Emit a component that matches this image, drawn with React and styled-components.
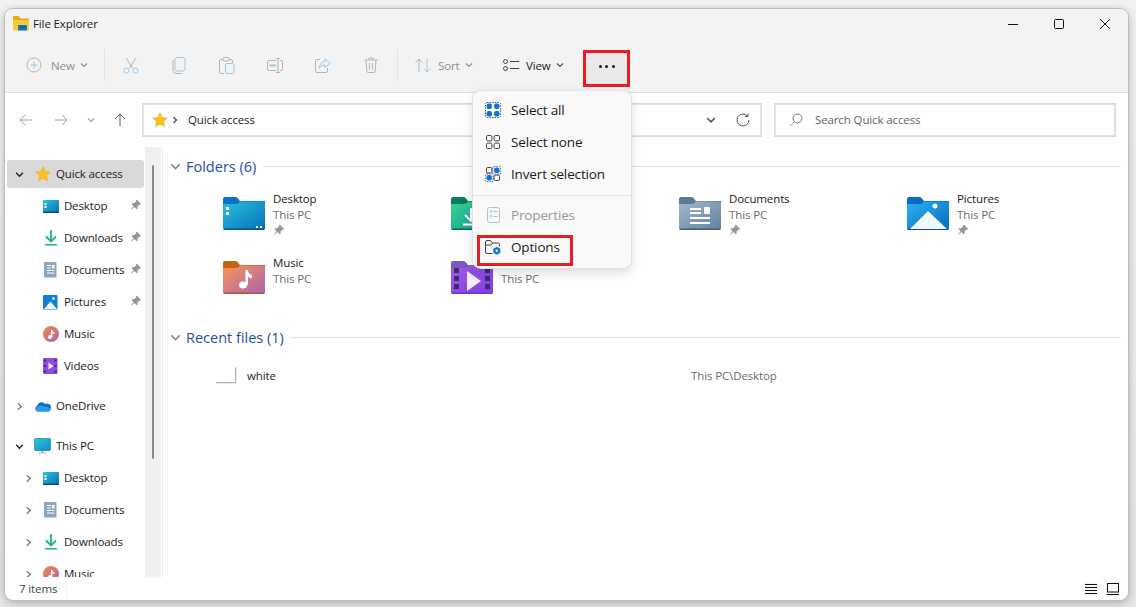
import React from 'react';
import styled, { createGlobalStyle } from 'styled-components';

const GlobalStyle = createGlobalStyle`
  html, body {
    margin: 0;
    padding: 0;
    background: #e9e9e9;
    overflow: hidden;
  }
  body {
    font-family: "Open Sans", "Noto Sans", sans-serif;
    font-size: 11.5px;
    letter-spacing: -0.12px;
    color: #1a1a1a;
  }
`;

const Page = styled.div`
  width: 1136px;
  height: 607px;
  padding: 9px 8px 7px 5px;
  box-sizing: border-box;
  background: linear-gradient(180deg, #f2f2f2 0%, #e6e6e6 100%);
`;

const Window = styled.div`
  position: relative;
  height: 100%;
  display: flex;
  flex-direction: column;
  background: #fff;
  border-radius: 8px;
  box-shadow: 0 0 0 1px #bdbdbd, 0 2px 10px rgba(0, 0, 0, 0.3);
`;

const TitleBar = styled.div`
  height: 29px;
  flex: none;
  display: flex;
  align-items: center;
  padding: 0 0 0 8px;
  background: #f3f3f3;
  border-radius: 8px 8px 0 0;
`;

const TitleText = styled.span`
  margin-left: 3px;
  flex: 1;
`;

const WindowButton = styled.div`
  width: 46px;
  height: 29px;
  display: flex;
  align-items: center;
  justify-content: center;
`;

const Toolbar = styled.div`
  height: 55px;
  flex: none;
  display: flex;
  align-items: center;
  padding-left: 9px;
  background: #f3f3f3;
  border-bottom: 1px solid #dedede;
  box-sizing: border-box;
`;

const ToolButton = styled.div`
  width: ${(p) => p.$w}px;
  padding-left: ${(p) => p.$pad}px;
  box-sizing: border-box;
  display: flex;
  align-items: center;
  gap: 5px;
  color: ${(p) => (p.$off ? '#8f8f8f' : '#1a1a1a')};
  svg:first-child {
    margin-right: ${(p) => p.$iconGap}px;
  }
`;

const IconButton = styled.div`
  width: 48px;
  display: flex;
  justify-content: center;
`;

const ToolSeparator = styled.div`
  width: 1px;
  height: 32px;
  margin: 0 2px;
  background: #e2e2e2;
`;

const MoreButton = styled.div`
  position: relative;
  width: 41px;
  height: 31px;
  margin: 7px 0 0 11px;
  display: flex;
  justify-content: center;
  align-items: center;
  background: #e9e9e9;
`;

const Dots = styled.div`
  display: flex;
  gap: 3.5px;
  margin-top: -5px;
`;

const Dot = styled.span`
  width: 3px;
  height: 3px;
  border-radius: 50%;
  background: #1a1a1a;
`;

const RedFrame = styled.div`
  position: absolute;
  border: 3px solid #ed1c24;
  left: ${(p) => p.$left}px;
  top: ${(p) => p.$top}px;
  width: ${(p) => p.$w}px;
  height: ${(p) => p.$h}px;
  box-sizing: border-box;
`;

const AddressRow = styled.div`
  height: 54px;
  flex: none;
  display: flex;
  align-items: center;
  padding: 0 12px 0 0;
  box-sizing: border-box;
`;

const NavArrow = styled.div`
  width: ${(p) => p.$w}px;
  display: flex;
  justify-content: center;
`;

const RefreshSlot = styled(NavArrow)`
  margin-left: 6px;
`;

const AddressBox = styled.div`
  width: 620px;
  height: 34px;
  margin-left: 9px;
  box-sizing: border-box;
  border: 1px solid #d9d9d9;
  outline: 1px solid #e4e4e4;
  outline-offset: -2px;
  display: flex;
  align-items: center;
  padding-left: 9px;
  gap: 3px;
  span {
    margin-top: -2px;
  }
`;

const AddressText = styled.span`
  flex: 1;
  margin-left: 6px;
`;

const SearchBox = styled(AddressBox)`
  width: 342px;
  margin-left: 12px;
  padding-left: 14px;
  gap: 12px;
  color: #5f5f5f;
`;

const Main = styled.div`
  flex: 1;
  min-height: 0;
  display: flex;
`;

const NavPane = styled.div`
  width: 140px;
  flex: none;
  overflow: hidden;
  padding: 13px 1px 0 2px;
  box-sizing: border-box;
`;

const NavRow = styled.div`
  height: 28px;
  margin-bottom: ${(p) => (p.$spaced ? 12 : 4)}px;
  display: flex;
  align-items: center;
  position: relative;
  border-radius: 3px;
  background: ${(p) => (p.$active ? '#d9d9d9' : 'transparent')};
  span {
    margin-top: -2px;
  }
`;

const NavChevron = styled.div`
  width: ${(p) => (p.$level ? 33 : 26)}px;
  flex: none;
  padding-left: ${(p) => (p.$level ? 17 : 8)}px;
  box-sizing: border-box;
  display: flex;
`;

const NavIconSlot = styled.div`
  width: 21px;
  flex: none;
  display: flex;
  justify-content: center;
  margin-left: ${(p) => (p.$top ? -1 : 0)}px;
`;

const NavLabel = styled.span`
  flex: 1;
`;

const NavPin = styled.div`
  position: absolute;
  right: 2px;
  top: 7px;
`;

const ScrollTrack = styled.div`
  width: 16px;
  flex: none;
  background: #f0f0f0;
  padding: 18px 0 0 7px;
  box-sizing: border-box;
`;

const ScrollThumb = styled.div`
  width: 2px;
  height: 294px;
  background: #8b8b8b;
  border-radius: 1px;
`;

const Content = styled.div`
  flex: 1;
  min-width: 0;
  padding: 9px 7px 0 7px;
  border-left: 1px solid #ececec;
  margin-left: 1px;
`;

const SectionHeader = styled.div`
  height: 20px;
  display: flex;
  align-items: center;
  gap: 5px;
  margin-top: ${(p) => p.$mt || 0}px;
  font-size: 14.5px;
  letter-spacing: 0;
  color: #1f4fa5;
`;

const SectionLine = styled.div`
  flex: 1;
  height: 1px;
  margin: 1px 0 0 2px;
  background: #e3e3e3;
`;

const FolderGrid = styled.div`
  display: grid;
  grid-template-columns: repeat(4, 228px);
  grid-auto-rows: 64px;
  padding-left: 53px;
  margin-top: 15px;
`;

const FolderTile = styled.div`
  display: flex;
  gap: 8px;
  align-items: flex-start;
`;

const FolderArt = styled.div`
  margin-top: 6px;
  line-height: 0;
`;

const TileText = styled.div`
  display: flex;
  flex-direction: column;
  line-height: 16px;
`;

const SubText = styled.span`
  color: #6e6a70;
`;

const PinSlot = styled.div`
  line-height: 0;
  margin-top: 1px;
`;

const FileRow = styled.div`
  display: flex;
  align-items: center;
  height: 20px;
  margin-top: 18px;
  padding-left: 46px;
`;

const FileIcon = styled.div`
  width: 20px;
  height: 16px;
  margin-right: 11px;
  box-sizing: border-box;
  border-right: 1px solid #b5b5b5;
  border-bottom: 1px solid #b5b5b5;
  box-shadow: 1px 1px 0 #e8e8e8;
`;

const FileName = styled.span`
  width: 444px;
`;

const StatusBar = styled.div`
  height: 23px;
  flex: none;
  display: flex;
  align-items: center;
  padding: 0 8px 0 14px;
  color: #444;
`;

const StatusText = styled.span`
  width: 47px;
`;

const StatusDivider = styled.div`
  width: 1px;
  height: 16px;
  background: #f0f0f0;
  flex: none;
`;

const StatusIcons = styled.div`
  margin-left: auto;
  display: flex;
  gap: 8px;
`;

const StatusIcon = styled.div`
  width: 14px;
  height: 14px;
  line-height: 0;
  background: #f7f7f7;
`;

const Menu = styled.div`
  position: absolute;
  left: 468px;
  top: 82px;
  width: 158px;
  height: 177px;
  box-sizing: border-box;
  padding-top: 3px;
  background: #f9f9f9;
  border-radius: 8px;
  box-shadow: 0 0 0 1px #e0e0e0, 0 4px 12px rgba(0, 0, 0, 0.16);
  z-index: 5;
`;

const MenuRow = styled.div`
  position: relative;
  height: 32px;
  display: flex;
  align-items: center;
  padding-left: 12px;
  gap: 10px;
  font-size: 13.5px;
  letter-spacing: -0.15px;
  color: ${(p) => (p.$off ? '#9a9a9a' : '#1a1a1a')};
`;

const MenuIcon = styled.div`
  width: 16px;
  flex: none;
  display: flex;
  justify-content: center;
  line-height: 0;
`;

const MenuSeparator = styled.div`
  height: 1px;
  margin: 5px 0 3px;
  background: #e6e6e6;
`;

/* icons */

const Chevron = ({ dir = 'down', color = '#555', size = 8 }) => {
  const d = dir === 'down' ? 'M1 2.5l3 3 3-3' : 'M2.5 1l3 3-3 3';
  return (
    <svg width={size} height={size} viewBox="0 0 8 8" fill="none">
      <path d={d} stroke={color} strokeWidth="1.2" />
    </svg>
  );
};

const TitleFolder = () => (
  <svg width="17" height="15" viewBox="0 0 17 15">
    <path d="M0 1.5C0 .7.6 0 1.4 0h4L7.5 2.5H16v2H0z" fill="#e8a917" />
    <rect y="4" width="16" height="10.5" rx="1" fill="#fdc830" />
    <rect x="5" y="9" width="9" height="5.5" fill="#0c7cc4" />
    <rect x="7" y="10.5" width="5" height="1.2" fill="#06467a" />
  </svg>
);

const Pin = ({ size = 12 }) => (
  <svg width={size} height={size} viewBox="0 0 12 12">
    <path d="M7 .8l4.2 4.2-1 .8-.7-.3-2 2 .1 2-.8.8-2.3-2.3L1 11l-.3-.3 2.9-3.5L1.4 5l.8-.8 2 .1 2-2-.3-.7z" fill="#8f979c" />
  </svg>
);

const Star = ({ size = 16 }) => (
  <svg width={size} height={size} viewBox="0 0 16 16">
    <path d="M8 .8l2.2 4.7 5 .6-3.7 3.5 1 5.1L8 12.2l-4.5 2.5 1-5.1L.8 6.100l5-.6z" fill="#fcc21b" stroke="#eda600" strokeWidth=".5" />
  </svg>
);

const FOLDERS = {
  desktop: { tab: '#0a70c8', from: '#29c0dc', to: '#0671b8', edge: '#0b4f86' },
  downloads: { tab: '#0a7a5e', from: '#3bd08f', to: '#0c9a93', edge: '#0a6b5a' },
  documents: { tab: '#5e7a90', from: '#a3b9d0', to: '#5f7f9e', edge: '#44607a' },
  pictures: { tab: '#0a6ac4', from: '#2cb2ef', to: '#0769c0', edge: '#0a4f94' },
  music: { tab: '#c06510', from: '#fa9456', to: '#a964ac', edge: '#a85a40' },
  videos: { tab: '#7f55c0', from: '#a05be8', to: '#7d3fe0', edge: '#6b3ac0' },
};

const FolderGlyph = ({ kind }) => {
  if (kind === 'desktop') {
    return (
      <g fill="#fff">
        <rect x="3" y="10" width="3" height="3" />
        <rect x="3" y="15" width="3" height="3" />
        <rect x="33" y="29" width="2" height="2" />
        <rect x="37" y="29" width="2" height="2" />
      </g>
    );
  }
  if (kind === 'downloads') {
    return <path d="M20 11v12M14 18l6 6 6-6M12 27.500h17" stroke="#fff" strokeWidth="2" fill="none" />;
  }
  if (kind === 'documents') {
    return (
      <g fill="#fff">
        <rect x="11" y="11" width="11" height="2" />
        <rect x="11" y="15" width="11" height="2" />
        <rect x="25" y="10" width="6" height="7" rx="1" />
        <rect x="11" y="20" width="20" height="2" />
        <rect x="11" y="25" width="20" height="2" />
      </g>
    );
  }
  if (kind === 'pictures') {
    return (
      <g>
        <circle cx="28" cy="9" r="2.500" fill="#fff" />
        <path d="M3 32L21 14 40 32z" fill="#f1f8fd" />
      </g>
    );
  }
  if (kind === 'music') {
    return (
      <g fill="#fff">
        <ellipse cx="20" cy="24" rx="4" ry="3.500" />
        <path d="M22.500 9H25c0 3 1 4 4 5v3c-2 0-3-.5-4-1.500V24h-2.500z" />
      </g>
    );
  }
  return (
    <g>
      <path d="M16 10l14 10-14 10z" fill="#f3eefc" />
      {[7, 15, 23].map((y) => (
        <g key={y} fill="#3d2a70">
          <rect x="3" y={y} width="5" height="5" />
          <rect x="34" y={y} width="5" height="5" />
        </g>
      ))}
    </g>
  );
};

const BigFolder = ({ kind }) => {
  const c = FOLDERS[kind];
  const id = `big-${kind}`;
  return (
    <svg width="42" height="33" viewBox="0 0 42 33">
      <defs>
        <linearGradient id={id} x1="0" y1="0" x2="1" y2="1">
          <stop offset="0" stopColor={c.from} />
          <stop offset="1" stopColor={c.to} />
        </linearGradient>
      </defs>
      <path d="M0 2a2 2 0 0 1 2-2h10c2 0 3 1 4 3l1 1h25v6H0z" fill={c.tab} />
      <path d="M0 7h13c2 0 3-1 4-2.500h23c1 0 2 1 2 2V31a2 2 0 0 1-2 2H2a2 2 0 0 1-2-2z" fill={`url(#${id})`} />
      <path d="M0 31.500h42a2 2 0 0 1-2 1.500H2a2 2 0 0 1-2-1.500z" fill={c.edge} />
      <FolderGlyph kind={kind} />
    </svg>
  );
};

const NavGlyph = ({ kind }) => {
  switch (kind) {
    case 'desktop':
      return (
        <svg width="16" height="13" viewBox="0 0 16 13">
          <defs>
            <linearGradient id="nav-desktop" x1="0" y1="0" x2="1" y2="1">
              <stop offset="0" stopColor="#2cc4dc" />
              <stop offset="1" stopColor="#0670b6" />
            </linearGradient>
          </defs>
          <rect width="16" height="12.500" rx="1" fill="url(#nav-desktop)" />
          <rect y="11.500" width="16" height="1.500" fill="#0b4f86" />
          <rect x="1.500" y="3" width="2" height="2" fill="#fff" />
          <rect x="1.500" y="6" width="2" height="2" fill="#fff" />
        </svg>
      );
    case 'downloads':
      return (
        <svg width="14" height="16" viewBox="0 0 14 16">
          <path d="M7 0v11M2 6.500L7 11.500l5-5" fill="none" stroke="#20b27c" strokeWidth="1.800" />
          <rect x="1" y="14" width="12" height="1.600" fill="#22b8a0" />
        </svg>
      );
    case 'documents':
      return (
        <svg width="13" height="16" viewBox="0 0 13 16">
          <rect width="12.500" height="15.500" rx="1" fill="#8fa6c0" />
          <g fill="#fff">
            <rect x="3" y="3" width="4" height="1" />
            <rect x="3" y="5.500" width="4" height="1" />
            <rect x="8" y="3" width="2.500" height="3.500" />
            <rect x="3" y="8" width="7.500" height="1" />
            <rect x="3" y="10.500" width="7.500" height="1" />
          </g>
        </svg>
      );
    case 'pictures':
      return (
        <svg width="15" height="15" viewBox="0 0 15 15">
          <rect width="14.500" height="14.500" rx="1" fill="#0d7fd6" />
          <circle cx="10.500" cy="3.500" r="1.300" fill="#fff" />
          <path d="M1 14L7.500 6.500 14 14z" fill="#f2f8fd" />
        </svg>
      );
    case 'music':
      return (
        <svg width="16" height="16" viewBox="0 0 16 16">
          <defs>
            <linearGradient id="nav-music" x1="0" y1="0" x2="1" y2="1">
              <stop offset="0" stopColor="#f08a4a" />
              <stop offset="1" stopColor="#b8629a" />
            </linearGradient>
          </defs>
          <circle cx="8" cy="8" r="8" fill="url(#nav-music)" />
          <circle cx="7" cy="11" r="2" fill="#fff" />
          <path d="M8 4h1.500c0 1.500.7 2 2 2.500v1.500c-1 0-1.500-.3-2-.7V11H8z" fill="#fff" />
        </svg>
      );
    case 'videos':
      return (
        <svg width="15" height="16" viewBox="0 0 15 16">
          <rect width="14.500" height="16" rx="1" fill="#8a4de0" />
          <path d="M5.500 4.500l5 3.500-5 3.500z" fill="#f3eefc" />
          {[1.500, 7, 12.500].map((y) => (
            <g key={y} fill="#3d2a70">
              <rect x="1" y={y} width="2" height="2" />
              <rect x="11.500" y={y} width="2" height="2" />
            </g>
          ))}
        </svg>
      );
    case 'onedrive':
      return (
        <svg width="17" height="11" viewBox="0 0 17 11">
          <path d="M4 10.500a3 3 0 0 1-.8-5.800A4.500 4.500 0 0 1 11.200 3a3.800 3.800 0 0 1 5.300 5 2.500 2.500 0 0 1-2.200 2.500z" fill="#0f6fc6" />
          <path d="M3.500 10.500a2.600 2.600 0 0 1 .8-5c1-1 4.500-1.200 7 .5 2.500-.5 5 .7 5.200 2.400a2.500 2.500 0 0 1-2.200 2.100z" fill="#2b9ae8" />
        </svg>
      );
    default:
      return (
        <svg width="17" height="16" viewBox="0 0 17 16">
          <defs>
            <linearGradient id="nav-pc" x1="0" y1="0" x2="1" y2="1">
              <stop offset="0" stopColor="#2cc8dc" />
              <stop offset="1" stopColor="#0f8cc6" />
            </linearGradient>
          </defs>
          <rect x=".5" y=".5" width="16" height="12" rx="1" fill="url(#nav-pc)" stroke="#1c6f94" strokeWidth=".6" />
          <rect x="7.500" y="13" width="2" height="1.500" fill="#8a9aa4" />
          <rect x="5" y="14.500" width="7" height="1" fill="#a8b4bc" />
        </svg>
      );
  }
};

const stroke = { fill: 'none', stroke: '#9cc8ea', strokeWidth: 1 };
const greyStroke = { fill: 'none', stroke: '#b5b5b5', strokeWidth: 1 };

const CutIcon = () => (
  <svg width="16" height="17" viewBox="0 0 16 17">
    <path d="M3 1l6.500 10M13 1L6.500 11" {...greyStroke} />
    <circle cx="3.500" cy="13.500" r="2.500" {...stroke} />
    <circle cx="12.500" cy="13.500" r="2.500" {...stroke} />
  </svg>
);

const CopyIcon = () => (
  <svg width="14" height="17" viewBox="0 0 14 17">
    <rect x="3" y=".5" width="10" height="13.500" rx="2" {...stroke} />
    <path d="M1 3v10.500a3 3 0 0 0 3 3h6" {...greyStroke} />
  </svg>
);

const PasteIcon = () => (
  <svg width="16" height="17" viewBox="0 0 16 17">
    <path d="M4 2.500H2a1.500 1.500 0 0 0-1.500 1.500v11a1.500 1.500 0 0 0 1.500 1.500h3M10 2.500h2A1.500 1.500 0 0 1 13.500 4v2" {...greyStroke} />
    <rect x="4" y=".5" width="6" height="3.500" rx="1" {...greyStroke} />
    <rect x="6.500" y="6.500" width="8.500" height="10" rx="1.500" {...stroke} />
  </svg>
);

const RenameIcon = () => (
  <svg width="16" height="15" viewBox="0 0 16 15">
    <path d="M9 2.500H2A1.500 1.500 0 0 0 .5 4v7A1.500 1.500 0 0 0 2 12.500h7M13 2.500h1A1.500 1.500 0 0 1 15.500 4v7a1.500 1.500 0 0 1-1.500 1.500h-1" {...greyStroke} />
    <path d="M9 .5h4M11 .5v14M9 14.500h4" {...greyStroke} />
    <rect x="2.500" y="6.500" width="6.500" height="2" fill="#9cc8ea" />
  </svg>
);

const ShareIcon = () => (
  <svg width="16" height="15" viewBox="0 0 16 15">
    <path d="M5 1.500H2A1.500 1.500 0 0 0 .5 3v10A1.500 1.500 0 0 0 2 14.500h9a1.500 1.500 0 0 0 1.500-1.500v-3" {...greyStroke} />
    <path d="M10 .8l5.200 4.400L10 9.500V7C7.500 7 5.500 8 4.200 10.500 4.500 6.500 6.500 3.800 10 3.300z" {...stroke} />
  </svg>
);

const TrashIcon = () => (
  <svg width="14" height="16" viewBox="0 0 14 16">
    <path d="M.5 3h13M5 3V1h4v2M2 3l.8 11a1.500 1.500 0 0 0 1.500 1.500h5.400A1.500 1.500 0 0 0 11.200 14L12 3M5.500 6v6.500M8.500 6v6.500" {...greyStroke} />
  </svg>
);

const dashed = { fill: 'none', stroke: '#333', strokeWidth: 0.8, strokeDasharray: '1.5 1.1' };

const SelectIcon = ({ mode }) => {
  const cells = [[4.2, 4.2], [11.8, 4.2], [4.2, 11.8], [11.8, 11.8]];
  const filled = (i) => mode === 'all' || (mode === 'invert' && (i === 1 || i === 2));
  return (
    <svg width="16" height="16" viewBox="0 0 16 16">
      {mode === 'all' && <rect x=".5" y=".5" width="15" height="15" rx="1.500" {...dashed} />}
      {cells.map(([x, y], i) =>
        filled(i) ? (
          <g key={i}>
            <rect x={x - 2.700} y={y - 2.700} width="5.400" height="5.400" rx="2" fill="#0a74da" />
            {mode === 'invert' && <rect x={x - 3.900} y={y - 3.900} width="7.800" height="7.800" rx="1" {...dashed} />}
          </g>
        ) : (
          <rect key={i} x={x - 2.700} y={y - 2.700} width="5.400" height="5.400" rx="1.300" fill="none" stroke="#444" strokeWidth="1" />
        )
      )}
    </svg>
  );
};

const PropertiesIcon = () => (
  <svg width="13" height="16" viewBox="0 0 13 16">
    <rect x=".5" y=".5" width="12" height="15" rx="2" fill="none" stroke="#bdbdbd" />
    <g fill="none" stroke="#9cc8ea" strokeWidth="1">
      <circle cx="3.800" cy="4.500" r="1" />
      <circle cx="3.800" cy="9.500" r="1" />
      <path d="M6.500 4.500h4M6.500 9.500h4" />
    </g>
  </svg>
);

const OptionsIcon = () => (
  <svg width="16" height="15" viewBox="0 0 16 15">
    <path d="M7.500 13.500H2A1.500 1.500 0 0 1 .5 12V2A1.500 1.500 0 0 1 2 .5h3.500L7.500 3H13a1.500 1.500 0 0 1 1.500 1.500V6.500M.5 5H6l1.500-2" fill="none" stroke="#444" />
    <path d="M11.800 6.800l3.500 2v4l-3.500 2-3.500-2v-4z" fill="#0a74da" />
    <circle cx="11.800" cy="10.800" r="1.200" fill="#f9f9f9" />
  </svg>
);

const navItems = [
  { label: 'Quick access', kind: 'star', top: true, open: true, active: true },
  { label: 'Desktop', kind: 'desktop', pin: true },
  { label: 'Downloads', kind: 'downloads', pin: true },
  { label: 'Documents', kind: 'documents', pin: true },
  { label: 'Pictures', kind: 'pictures', pin: true },
  { label: 'Music', kind: 'music' },
  { label: 'Videos', kind: 'videos', spaced: true },
  { label: 'OneDrive', kind: 'onedrive', top: true, closed: true, spaced: true },
  { label: 'This PC', kind: 'pc', top: true, open: true },
  { label: 'Desktop', kind: 'desktop', closed: true },
  { label: 'Documents', kind: 'documents', closed: true },
  { label: 'Downloads', kind: 'downloads', closed: true },
  { label: 'Music', kind: 'music', closed: true },
];

const folders = [
  { name: 'Desktop', kind: 'desktop', pin: true },
  { name: 'Downloads', kind: 'downloads', pin: true },
  { name: 'Documents', kind: 'documents', pin: true },
  { name: 'Pictures', kind: 'pictures', pin: true },
  { name: 'Music', kind: 'music' },
  { name: 'Videos', kind: 'videos' },
];

const App = () => (
  <>
    <GlobalStyle />
    <Page>
      <Window>
        <TitleBar>
          <TitleFolder />
          <TitleText>File Explorer</TitleText>
          <WindowButton>
            <svg width="10" height="10" viewBox="0 0 10 10"><path d="M0 5.500h10" stroke="#111" /></svg>
          </WindowButton>
          <WindowButton>
            <svg width="10" height="10" viewBox="0 0 10 10"><rect x=".5" y=".5" width="9" height="9" rx="1" fill="none" stroke="#111" /></svg>
          </WindowButton>
          <WindowButton>
            <svg width="10" height="10" viewBox="0 0 10 10"><path d="M0 0l10 10M10 0L0 10" stroke="#111" /></svg>
          </WindowButton>
        </TitleBar>

        <Toolbar>
          <ToolButton $w={88} $pad={12} $iconGap={4} $off>
            <svg width="16" height="16" viewBox="0 0 16 16">
              <circle cx="8" cy="8" r="7" fill="none" stroke="#b5b5b5" />
              <path d="M8 4.500v7M4.500 8h7" stroke="#9cc8ea" />
            </svg>
            New
            <Chevron color="#8f8f8f" />
          </ToolButton>
          <ToolSeparator />
          <IconButton><CutIcon /></IconButton>
          <IconButton><CopyIcon /></IconButton>
          <IconButton><PasteIcon /></IconButton>
          <IconButton><RenameIcon /></IconButton>
          <IconButton><ShareIcon /></IconButton>
          <IconButton><TrashIcon /></IconButton>
          <ToolSeparator />
          <ToolButton $w={90} $pad={15} $iconGap={2} $off>
            <svg width="16" height="15" viewBox="0 0 16 15">
              <path d="M4 14V1M.5 4.500L4 1l3.500 3.500" {...greyStroke} />
              <path d="M12 1v13M8.500 10.500L12 14l3.500-3.500" {...stroke} />
            </svg>
            Sort
            <Chevron color="#8f8f8f" />
          </ToolButton>
          <ToolButton $w={85} $pad={13} $iconGap={2}>
            <svg width="16" height="12" viewBox="0 0 16 12">
              <circle cx="2.500" cy="2.500" r="2" fill="none" stroke="#444" />
              <circle cx="2.500" cy="9.500" r="2" fill="none" stroke="#444" />
              <path d="M7 2.500h9M7 9.500h9" stroke="#444" />
            </svg>
            View
            <Chevron />
          </ToolButton>
          <MoreButton>
            <Dots><Dot /><Dot /><Dot /></Dots>
            <RedFrame $left={-3} $top={-3} $w={47} $h={37} />
          </MoreButton>
        </Toolbar>

        <AddressRow>
          <NavArrow $w={42}>
            <svg width="14" height="12" viewBox="0 0 14 12"><path d="M13 6H1M6 1L1 6l5 5" fill="none" stroke="#a0a0a0" /></svg>
          </NavArrow>
          <NavArrow $w={28}>
            <svg width="14" height="12" viewBox="0 0 14 12"><path d="M1 6h12M8 1l5 5-5 5" fill="none" stroke="#a0a0a0" /></svg>
          </NavArrow>
          <NavArrow $w={32}><Chevron color="#a0a0a0" /></NavArrow>
          <NavArrow $w={26}>
            <svg width="12" height="14" viewBox="0 0 12 14"><path d="M6 13V1M1 6l5-5 5 5" fill="none" stroke="#555" /></svg>
          </NavArrow>
          <AddressBox>
            <Star />
            <Chevron dir="right" color="#444" />
            <AddressText>Quick access</AddressText>
            <Chevron size={10} />
            <RefreshSlot $w={36}>
              <svg width="14" height="14" viewBox="0 0 14 14">
                <path d="M11.500 3A6 6 0 1 0 13 7M12 .5V3.500H9" fill="none" stroke="#555" />
              </svg>
            </RefreshSlot>
          </AddressBox>
          <SearchBox>
            <svg width="14" height="14" viewBox="0 0 14 14">
              <circle cx="8.500" cy="5.500" r="4.500" fill="none" stroke="#777" />
              <path d="M5.200 8.800L.7 13.300" stroke="#a88" />
            </svg>
            <span>Search Quick access</span>
          </SearchBox>
        </AddressRow>

        <Main>
          <NavPane>
            {navItems.map((item, i) => (
              <NavRow key={i} $active={item.active} $spaced={item.spaced}>
                <NavChevron $level={!item.top}>
                  {item.open && <Chevron color="#222" size={9} />}
                  {item.closed && <Chevron dir="right" color="#777" size={9} />}
                </NavChevron>
                <NavIconSlot $top={item.top}>
                  {item.kind === 'star' ? <Star /> : <NavGlyph kind={item.kind} />}
                </NavIconSlot>
                <NavLabel>&nbsp;{item.label}</NavLabel>
                {item.pin && <NavPin><Pin /></NavPin>}
              </NavRow>
            ))}
          </NavPane>
          <ScrollTrack><ScrollThumb /></ScrollTrack>
          <Content>
            <SectionHeader>
              <Chevron size={11} color="#888" />
              Folders (6)
              <SectionLine />
            </SectionHeader>
            <FolderGrid>
              {folders.map((f) => (
                <FolderTile key={f.name}>
                  <FolderArt><BigFolder kind={f.kind} /></FolderArt>
                  <TileText>
                    {f.name}
                    <SubText>This PC</SubText>
                    {f.pin && <PinSlot><Pin /></PinSlot>}
                  </TileText>
                </FolderTile>
              ))}
            </FolderGrid>
            <SectionHeader $mt={8}>
              <Chevron size={11} color="#888" />
              Recent files (1)
              <SectionLine />
            </SectionHeader>
            <FileRow>
              <FileIcon />
              <FileName>white</FileName>
              <SubText>This PC\Desktop</SubText>
            </FileRow>
          </Content>
        </Main>

        <StatusBar>
          <StatusText>7 items</StatusText>
          <StatusDivider />
          <StatusIcons>
            <StatusIcon>
              <svg width="14" height="14" viewBox="0 0 14 14">
                <path d="M1 2.500h12M1 5.500h12M1 8.500h12M1 11.500h12" stroke="#111" />
              </svg>
            </StatusIcon>
            <StatusIcon>
              <svg width="14" height="14" viewBox="0 0 14 14">
                <rect x="1.500" y="1.500" width="11" height="8.500" fill="none" stroke="#111" />
                <path d="M1 12.500h12" stroke="#111" />
              </svg>
            </StatusIcon>
          </StatusIcons>
        </StatusBar>

        <Menu>
          <MenuRow><MenuIcon><SelectIcon mode="all" /></MenuIcon>Select all</MenuRow>
          <MenuRow><MenuIcon><SelectIcon mode="none" /></MenuIcon>Select none</MenuRow>
          <MenuRow><MenuIcon><SelectIcon mode="invert" /></MenuIcon>Invert selection</MenuRow>
          <MenuSeparator />
          <MenuRow $off><MenuIcon><PropertiesIcon /></MenuIcon>Properties</MenuRow>
          <MenuRow>
            <MenuIcon><OptionsIcon /></MenuIcon>
            Options
            <RedFrame $left={4} $top={4} $w={96} $h={31} />
          </MenuRow>
        </Menu>
      </Window>
    </Page>
  </>
);

export default App;
